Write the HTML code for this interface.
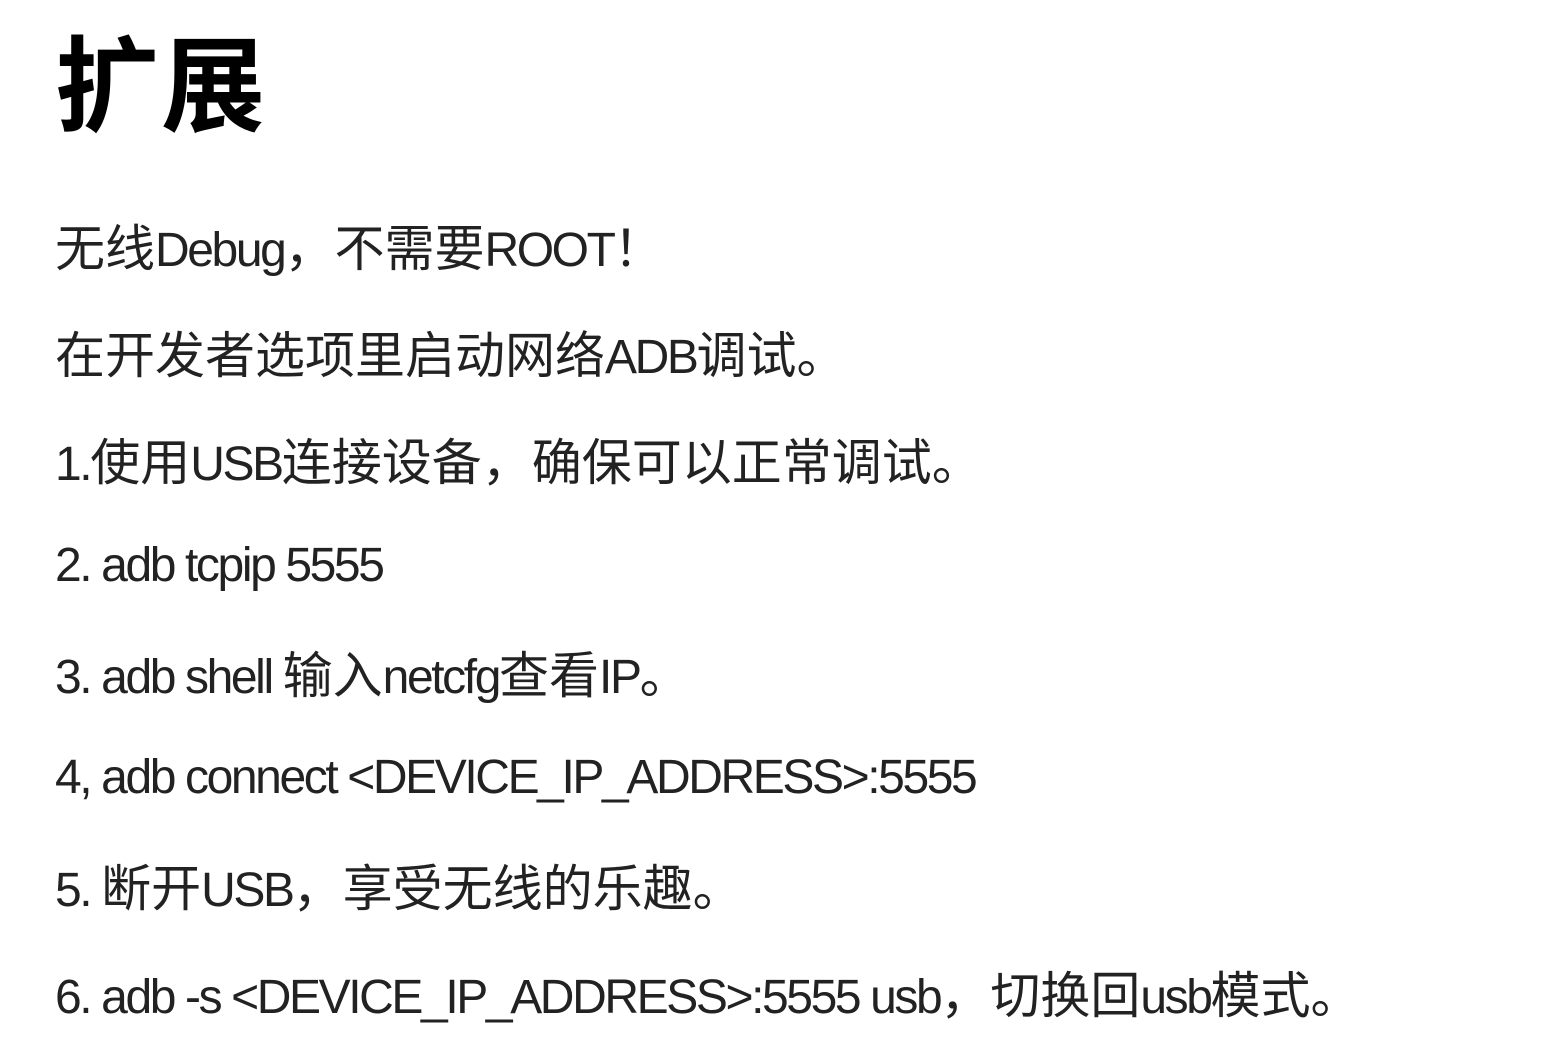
<!DOCTYPE html>
<html><head><meta charset="utf-8"><style>
html,body{margin:0;padding:0;background:#fff;width:1552px;height:1050px;overflow:hidden}
.t{position:absolute;left:55px;top:18px;font-family:"Noto Sans CJK SC",sans-serif;font-weight:700;font-size:104px;line-height:120px;color:#000;letter-spacing:2px}
.l{position:absolute;left:55px;font-family:"Liberation Sans","Noto Sans CJK SC",sans-serif;font-size:48px;line-height:60px;color:#222;white-space:nowrap}
.l span{letter-spacing:-2.4px;font-size:48px}
.l span.c{font-family:"Noto Sans CJK SC",sans-serif;font-size:50px;letter-spacing:0}
</style></head><body>
<div class="t">扩展</div>
<div class="l" style="top:215px"><span class="c">无线</span><span>Debug</span><span class="c">，不需要</span><span>ROOT</span><span class="c">！</span></div>
<div class="l" style="top:322px"><span class="c">在开发者选项里启动网络</span><span>ADB</span><span class="c">调试。</span></div>
<div class="l" style="top:429px"><span>1.</span><span class="c">使用</span><span>USB</span><span class="c">连接设备，确保可以正常调试。</span></div>
<div class="l" style="top:536px"><span>2. adb tcpip 5555</span></div>
<div class="l" style="top:642px"><span>3. adb shell </span><span class="c">输入</span><span>netcfg</span><span class="c">查看</span><span>IP</span><span class="c">。</span></div>
<div class="l" style="top:748px"><span>4, adb connect &lt;DEVICE_IP_ADDRESS&gt;:5555</span></div>
<div class="l" style="top:855px"><span>5. </span><span class="c">断开</span><span>USB</span><span class="c">，享受无线的乐趣。</span></div>
<div class="l" style="top:962px"><span>6. adb -s &lt;DEVICE_IP_ADDRESS&gt;:5555 usb</span><span class="c">，切换回</span><span>usb</span><span class="c">模式。</span></div>
</body></html>
